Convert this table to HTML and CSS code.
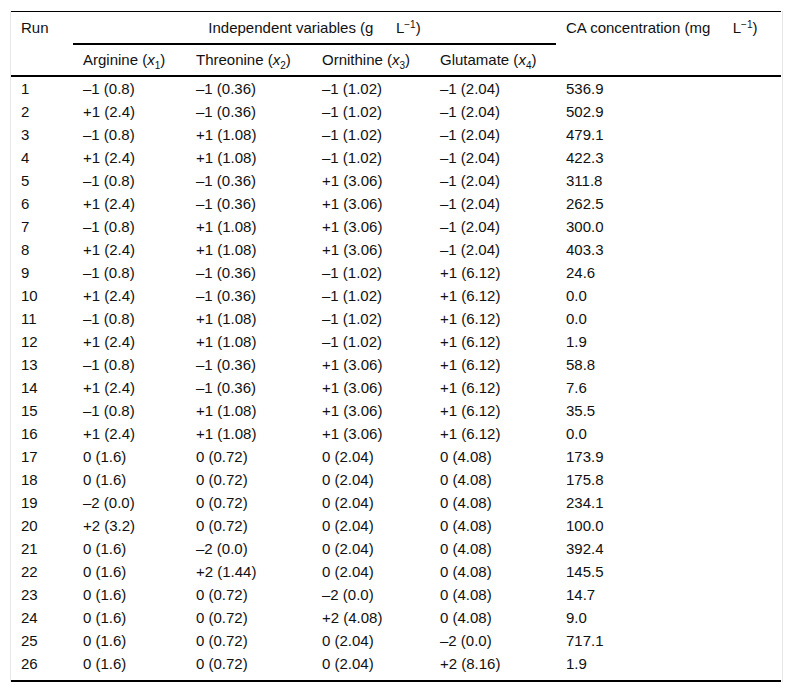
FILE: index.html
```html
<!DOCTYPE html>
<html>
<head>
<meta charset="utf-8">
<link rel="stylesheet" href="styles.css">
</head>
<body>
<div class="wrap">
<table class="tbl">
<colgroup>
<col class="c-run"><col class="c-arg"><col class="c-thr"><col class="c-orn"><col class="c-glu"><col class="c-ca">
</colgroup>
<thead>
<tr class="h1">
<th rowspan="2" class="top">Run</th>
<th colspan="4" class="group">Independent variables (g&emsp;&ensp;L<sup>−1</sup>)</th>
<th rowspan="2" class="top">CA concentration (mg&emsp;&ensp;L<sup>−1</sup>)</th>
</tr>
<tr class="h2">
<th>Arginine (<i>x</i><sub>1</sub>)</th>
<th>Threonine (<i>x</i><sub>2</sub>)</th>
<th>Ornithine (<i>x</i><sub>3</sub>)</th>
<th>Glutamate (<i>x</i><sub>4</sub>)</th>
</tr>
</thead>
<tbody>
<tr><td>1</td><td>–1 (0.8)</td><td>–1 (0.36)</td><td>–1 (1.02)</td><td>–1 (2.04)</td><td>536.9</td></tr>
<tr><td>2</td><td>+1 (2.4)</td><td>–1 (0.36)</td><td>–1 (1.02)</td><td>–1 (2.04)</td><td>502.9</td></tr>
<tr><td>3</td><td>–1 (0.8)</td><td>+1 (1.08)</td><td>–1 (1.02)</td><td>–1 (2.04)</td><td>479.1</td></tr>
<tr><td>4</td><td>+1 (2.4)</td><td>+1 (1.08)</td><td>–1 (1.02)</td><td>–1 (2.04)</td><td>422.3</td></tr>
<tr><td>5</td><td>–1 (0.8)</td><td>–1 (0.36)</td><td>+1 (3.06)</td><td>–1 (2.04)</td><td>311.8</td></tr>
<tr><td>6</td><td>+1 (2.4)</td><td>–1 (0.36)</td><td>+1 (3.06)</td><td>–1 (2.04)</td><td>262.5</td></tr>
<tr><td>7</td><td>–1 (0.8)</td><td>+1 (1.08)</td><td>+1 (3.06)</td><td>–1 (2.04)</td><td>300.0</td></tr>
<tr><td>8</td><td>+1 (2.4)</td><td>+1 (1.08)</td><td>+1 (3.06)</td><td>–1 (2.04)</td><td>403.3</td></tr>
<tr><td>9</td><td>–1 (0.8)</td><td>–1 (0.36)</td><td>–1 (1.02)</td><td>+1 (6.12)</td><td>24.6</td></tr>
<tr><td>10</td><td>+1 (2.4)</td><td>–1 (0.36)</td><td>–1 (1.02)</td><td>+1 (6.12)</td><td>0.0</td></tr>
<tr><td>11</td><td>–1 (0.8)</td><td>+1 (1.08)</td><td>–1 (1.02)</td><td>+1 (6.12)</td><td>0.0</td></tr>
<tr><td>12</td><td>+1 (2.4)</td><td>+1 (1.08)</td><td>–1 (1.02)</td><td>+1 (6.12)</td><td>1.9</td></tr>
<tr><td>13</td><td>–1 (0.8)</td><td>–1 (0.36)</td><td>+1 (3.06)</td><td>+1 (6.12)</td><td>58.8</td></tr>
<tr><td>14</td><td>+1 (2.4)</td><td>–1 (0.36)</td><td>+1 (3.06)</td><td>+1 (6.12)</td><td>7.6</td></tr>
<tr><td>15</td><td>–1 (0.8)</td><td>+1 (1.08)</td><td>+1 (3.06)</td><td>+1 (6.12)</td><td>35.5</td></tr>
<tr><td>16</td><td>+1 (2.4)</td><td>+1 (1.08)</td><td>+1 (3.06)</td><td>+1 (6.12)</td><td>0.0</td></tr>
<tr><td>17</td><td>0 (1.6)</td><td>0 (0.72)</td><td>0 (2.04)</td><td>0 (4.08)</td><td>173.9</td></tr>
<tr><td>18</td><td>0 (1.6)</td><td>0 (0.72)</td><td>0 (2.04)</td><td>0 (4.08)</td><td>175.8</td></tr>
<tr><td>19</td><td>–2 (0.0)</td><td>0 (0.72)</td><td>0 (2.04)</td><td>0 (4.08)</td><td>234.1</td></tr>
<tr><td>20</td><td>+2 (3.2)</td><td>0 (0.72)</td><td>0 (2.04)</td><td>0 (4.08)</td><td>100.0</td></tr>
<tr><td>21</td><td>0 (1.6)</td><td>–2 (0.0)</td><td>0 (2.04)</td><td>0 (4.08)</td><td>392.4</td></tr>
<tr><td>22</td><td>0 (1.6)</td><td>+2 (1.44)</td><td>0 (2.04)</td><td>0 (4.08)</td><td>145.5</td></tr>
<tr><td>23</td><td>0 (1.6)</td><td>0 (0.72)</td><td>–2 (0.0)</td><td>0 (4.08)</td><td>14.7</td></tr>
<tr><td>24</td><td>0 (1.6)</td><td>0 (0.72)</td><td>+2 (4.08)</td><td>0 (4.08)</td><td>9.0</td></tr>
<tr><td>25</td><td>0 (1.6)</td><td>0 (0.72)</td><td>0 (2.04)</td><td>–2 (0.0)</td><td>717.1</td></tr>
<tr class="last"><td>26</td><td>0 (1.6)</td><td>0 (0.72)</td><td>0 (2.04)</td><td>+2 (8.16)</td><td>1.9</td></tr>
</tbody>
</table>
</div>
</body>
</html>
```

FILE: styles.css
```css
html, body {
  margin: 0;
  padding: 0;
  background: #fff;
}
body {
  font-family: "Liberation Sans", Arial, sans-serif;
  font-size: 15px;
  color: #111;
}
.wrap {
  margin: 11px 0 0 10px;
  width: 771px;
  border-left: 1px solid #e6e6e6;
  border-right: 1px solid #e6e6e6;
}
.tbl {
  width: 770px;
  border-collapse: collapse;
  table-layout: fixed;
  border-top: 1px solid #000;
  border-bottom: 2px solid #000;
}
.c-run { width: 62px; }
.c-arg { width: 113px; }
.c-thr { width: 126px; }
.c-orn { width: 118px; }
.c-glu { width: 126px; }
.c-ca { width: 225px; }
th {
  font-weight: normal;
  text-align: left;
  vertical-align: top;
  line-height: 16px;
  padding: 8px 10px 7px;
  white-space: nowrap;
}
.h2 th {
  padding: 7px 10px 7px;
}
thead {
  border-bottom: 2px solid #000;
}
th.group {
  text-align: center;
  border-bottom: 2px solid #000;
}
sup {
  font-size: 10px;
  line-height: 0;
  position: relative;
  top: 1px;
}
sub {
  font-size: 10px;
  line-height: 0;
}
td {
  padding: 3px 10px;
  line-height: 17px;
  white-space: nowrap;
}
tr.last td {
  padding-bottom: 8px;
}
```
